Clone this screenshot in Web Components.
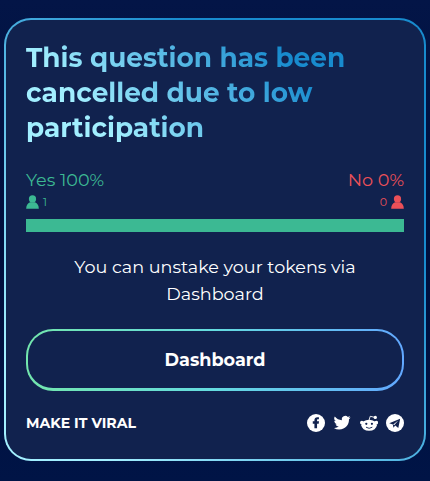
<!DOCTYPE html>
<html lang="en">
<head>
<meta charset="utf-8">
<title>Question</title>
<style>
  body {
    margin: 0;
    height: 481px;
    box-sizing: border-box;
    padding: 18px 4px 20px;
    overflow: hidden;
    background: linear-gradient(#031547, #010f3c 50%, #001446);
    color: #fff;
    font-family: Montserrat, Inter, "Open Sans", sans-serif;
  }
</style>
</head>
<body>
<question-card>
  <gradient-title slot="title">This question has been cancelled due to low participation</gradient-title>
  <vote-result></vote-result>
  <card-message>You can unstake your tokens via Dashboard</card-message>
  <outline-button>Dashboard</outline-button>
  <share-bar>MAKE IT VIRAL</share-bar>
</question-card>

<script>
const define = (name, template) => {
  customElements.define(name, class extends HTMLElement {
    constructor() {
      super();
      this.attachShadow({ mode: "open" }).innerHTML = template;
    }
  });
};

define("question-card", `
  <style>
  :host {
    display: flex;
    flex-direction: column;
    box-sizing: border-box;
    height: 443px;
    padding: 20px;
    border: 2px solid transparent;
    border-radius: 27px;
    background:
      linear-gradient(#11224e, #11224e) padding-box,
      linear-gradient(45deg, #a2efff 12%, #188bce 72%) border-box;
  }
  </style>
  <slot name="title"></slot>
  <slot></slot>
`);

define("gradient-title", `
  <style>
  :host {
    display: block;
    height: 105px;
    font-size: 26.4px;
    font-weight: 700;
    line-height: 35px;
    color: transparent;
    background: linear-gradient(45deg, #a2efff 20%, #188bce 72%);
    -webkit-background-clip: text;
    background-clip: text;
  }
  </style>
  <slot></slot>
`);

define("vote-result", `
  <style>
  :host { display: block; margin-top: 22px; }
  .row { display: flex; justify-content: space-between; }
  .labels { font-size: 17.6px; line-height: 26px; height: 27px; }
  .counts { font-size: 11px; line-height: 16px; height: 16px; }
  .counts span { display: flex; align-items: center; gap: 4px; }
  .yes { color: #3cb993; }
  .no { color: #eb5058; }
  svg { width: 13px; height: 14px; fill: currentColor; }
  .bar { height: 13px; margin-top: 9px; background: #3cb993; }
  </style>
  <div class="row labels">
    <span class="yes">Yes 100%</span>
    <span class="no">No 0%</span>
  </div>
  <div class="row counts">
    <span class="yes"><svg viewBox="0 0 13 14"><circle cx="6.5" cy="3.9" r="3.6"/><path d="M.2 13.7C.2 10.5 1.5 8.2 4 7.2H9C11.5 8.2 12.8 10.5 12.8 13.7Z"/></svg>1</span>
    <span class="no">0<svg viewBox="0 0 13 14"><circle cx="6.5" cy="3.9" r="3.6"/><path d="M.2 13.7C.2 10.5 1.5 8.2 4 7.2H9C11.5 8.2 12.8 10.5 12.8 13.7Z"/></svg></span>
  </div>
  <div class="bar"></div>
`);

define("card-message", `
  <style>
  :host {
    display: block;
    margin-top: 21px;
    padding: 0 30px;
    font-size: 17.6px;
    line-height: 27px;
    text-align: center;
  }
  </style>
  <slot></slot>
`);

define("outline-button", `
  <style>
  :host { display: block; margin-top: 22px; }
  button {
    display: block;
    width: 100%;
    height: 62px;
    padding: 0;
    border: 2px solid transparent;
    border-bottom-width: 3px;
    border-radius: 27px;
    background:
      linear-gradient(#11224e, #11224e) padding-box,
      linear-gradient(90deg, #73e6ad, #65dce0 50%, #62a8ff) border-box;
    color: #fff;
    font: 700 17.6px/27px Montserrat, Inter, "Open Sans", sans-serif;
  }
  </style>
  <button><slot></slot></button>
`);

define("share-bar", `
  <style>
  :host {
    display: flex;
    align-items: center;
    justify-content: space-between;
    height: 18px;
    margin-top: 23px;
    font-size: 14.08px;
    font-weight: 700;
    line-height: 18px;
  }
  .icons { display: flex; gap: 8.33px; }
  svg { display: block; width: 18px; height: 18px; fill: #fff; }
  .cut { fill: #11224e; }
  </style>
  <slot></slot>
  <div class="icons">
    <svg viewBox="0 0 24 24">
      <circle cx="12" cy="12" r="12"/>
      <path class="cut" d="M9.9 19v-6H7.7V9.6h2.2V8.2c0-2.6 1.4-3.9 3.9-3.9h2.1v2.8h-1.3c-1 0-1.2.4-1.2 1.2v1.3h2.6l-.4 3.4h-2.2V19z"/>
    </svg>
    <svg viewBox="0 0 24 24">
      <path d="M23.6 4.9a9.7 9.7 0 0 1-2.8.8 4.9 4.9 0 0 0 2.1-2.7 9.8 9.8 0 0 1-3.1 1.2 4.9 4.9 0 0 0-8.4 4.5A13.9 13.9 0 0 1 1.3 3.5a4.9 4.9 0 0 0 1.5 6.6 4.9 4.9 0 0 1-2.2-.6c0 2.4 1.6 4.4 3.9 4.9a4.9 4.9 0 0 1-2.2.1 4.9 4.9 0 0 0 4.6 3.4A9.9 9.9 0 0 1 0 19.9a13.9 13.9 0 0 0 7.5 2.2c9.1 0 14.3-7.7 13.9-14.6a10 10 0 0 0 2.2-2.6z" transform="translate(1.2 0) scale(.94)"/>
    </svg>
    <svg viewBox="0 0 24 24">
      <path d="M12 8.5l1.6-5.4 5.4 1.2" fill="none" stroke="#fff" stroke-width="1.2"/>
      <circle cx="20.4" cy="4.5" r="2.2"/>
      <circle cx="2.5" cy="11.4" r="2.5"/>
      <circle cx="21.7" cy="11.4" r="2.5"/>
      <ellipse cx="12.1" cy="15" rx="10.3" ry="7.4"/>
      <circle class="cut" cx="8.4" cy="13" r="1.5"/>
      <circle class="cut" cx="15.9" cy="13" r="1.5"/>
      <path d="M8 17.6q4.2 3 8.4 0" fill="none" stroke="#11224e" stroke-width="1.2"/>
    </svg>
    <svg viewBox="0 0 24 24">
      <circle cx="12" cy="12" r="12"/>
      <path class="cut" d="M4.3 12.2L18.9 6.2L16.4 18.6L12.3 15.4L9.9 18.2L9.2 14z"/>
      <path d="M9.6 14.1L16.4 8.5L10.9 15z"/>
    </svg>
  </div>
`);
</script>
</body>
</html>
